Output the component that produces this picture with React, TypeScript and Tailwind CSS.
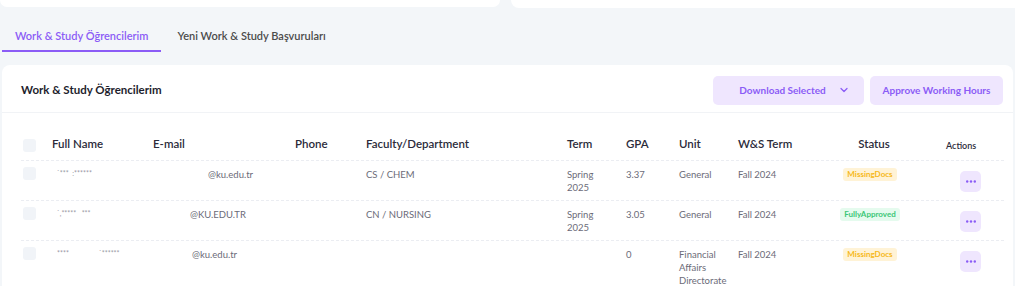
import { ChevronDown } from 'lucide-react';

const cols = 'grid grid-cols-[31px_101px_142px_71px_201px_59px_53px_59px_82px_108px_1fr]';

type Row = {
  name: React.ReactNode;
  email: string;
  emailPad: string;
  faculty: string;
  term: string[];
  gpa: string;
  unit: string[];
  wsTerm: string;
  status: 'MissingDocs' | 'FullyApproved';
};

const rows: Row[] = [
  {
    name: <span>`***&nbsp;&nbsp;:******</span>,
    email: '@ku.edu.tr',
    emailPad: 'pl-[55px]',
    faculty: 'CS / CHEM',
    term: ['Spring', '2025'],
    gpa: '3.37',
    unit: ['General'],
    wsTerm: 'Fall 2024',
    status: 'MissingDocs',
  },
  {
    name: <span>`,*****&nbsp;&nbsp;&nbsp;***</span>,
    email: '@KU.EDU.TR',
    emailPad: 'pl-[37px]',
    faculty: 'CN / NURSING',
    term: ['Spring', '2025'],
    gpa: '3.05',
    unit: ['General'],
    wsTerm: 'Fall 2024',
    status: 'FullyApproved',
  },
  {
    name: (
      <span>
        ****<span className="pl-[30px]">`******</span>
      </span>
    ),
    email: '@ku.edu.tr',
    emailPad: 'pl-[39px]',
    faculty: '',
    term: [],
    gpa: '0',
    unit: ['Financial', 'Affairs', 'Directorate'],
    wsTerm: 'Fall 2024',
    status: 'MissingDocs',
  },
];

function Dots() {
  return (
    <svg width="10" height="3" viewBox="0 0 10 3" className="fill-[#8b5cf6]">
      <circle cx="1.2" cy="1.5" r="1.2" />
      <circle cx="5" cy="1.5" r="1.2" />
      <circle cx="8.8" cy="1.5" r="1.2" />
    </svg>
  );
}

function StatusBadge({ status }: { status: Row['status'] }) {
  if (status === 'FullyApproved') {
    return (
      <span className="rounded-[3px] bg-[#e5fbee] px-[4px] text-[8px] font-bold leading-[13px] text-[#3cc777]">
        FullyApproved
      </span>
    );
  }
  return (
    <span className="rounded-[3px] bg-[#fff3d6] px-[4px] text-[8px] font-bold leading-[13px] text-[#f6b91a]">
      MissingDocs
    </span>
  );
}

export default function App() {
  return (
    <div className="h-[286px] overflow-hidden bg-white font-['Lato',sans-serif]">
      <div className="mr-px h-full bg-[#f3f6f9]">
        {/* top cards */}
        <div className="flex gap-[11px]">
          <div className="h-[7px] w-[500px] rounded-b-lg bg-white" />
          <div className="h-[8px] flex-1 rounded-bl-lg bg-white" />
        </div>

        {/* tabs */}
        <div className="ml-[2px] flex gap-[3px] pt-[20px]">
          <button className="border-b-2 border-[#8b5cf6] px-[13px] pb-[6px] text-[11px] font-semibold leading-[16px] text-[#8b5cf6]">
            Work &amp; Study Öğrencilerim
          </button>
          <button className="border-b-2 border-transparent px-[13px] pb-[6px] text-[11px] font-semibold leading-[16px] text-[#4b4b4b]">
            Yeni Work &amp; Study Başvuruları
          </button>
        </div>

        {/* main card */}
        <div className="mx-[2px] mt-[13px] rounded-t-lg bg-white">
          <div className="flex h-[48px] items-center border-b border-[#f1f3f6] pt-[3px] pl-[19px] pr-[10px]">
            <h2 className="flex-1 text-[11.5px] font-bold text-[#1e1e2d]">Work &amp; Study Öğrencilerim</h2>
            <button className="flex h-[29px] w-[151px] items-center justify-center gap-[12px] rounded-[5px] bg-[#efe6fe] pl-[12px] text-[10px] font-bold text-[#8b5cf6]">
              Download Selected
              <ChevronDown size={12} strokeWidth={2.5} />
            </button>
            <button className="ml-[6px] h-[29px] w-[133px] rounded-[5px] bg-[#efe6fe] text-[10px] font-bold text-[#8b5cf6]">
              Approve Working Hours
            </button>
          </div>

          <div className="pl-[19px] pr-[9px]">
            {/* header */}
            <div
              className={`${cols} items-center border-b border-dashed border-[#ebedf2] pt-[23px] pb-[9px] text-[11.5px] font-semibold leading-[15px] text-[#2b2b3a]`}
            >
              <div className="h-[15px]">
                <div className="mt-[3px] ml-[2px] h-[13px] w-[13px] rounded-[3px] bg-[#f1f4f8]" />
              </div>
              <div>Full Name</div>
              <div>E-mail</div>
              <div>Phone</div>
              <div>Faculty/Department</div>
              <div>Term</div>
              <div>GPA</div>
              <div>Unit</div>
              <div>W&amp;S Term</div>
              <div className="text-center">Status</div>
              <div className="mt-[4px] pl-[18px] text-[9px] leading-[11px]">Actions</div>
            </div>

            {rows.map((r, i) => (
              <div
                key={i}
                className={`${cols} items-start border-b border-dashed border-[#ebedf2] pb-[6px] text-[9.5px] leading-[13px] text-[#6b6b78]`}
              >
                <div>
                  <div className="mt-[6px] ml-[2px] h-[13px] w-[13px] rounded-[3px] bg-[#f1f4f8]" />
                </div>
                <div className="pt-[6px] pl-[5px] text-[7px] text-[#9a9aa5]">{r.name}</div>
                <div className={`pt-[7px] ${r.emailPad}`}>{r.email}</div>
                <div />
                <div className="pt-[7px]">{r.faculty}</div>
                <div className="pt-[7px]">
                  {r.term.map((t) => (
                    <div key={t}>{t}</div>
                  ))}
                </div>
                <div className="pt-[7px]">{r.gpa}</div>
                <div className="pt-[7px]">
                  {r.unit.map((u) => (
                    <div key={u}>{u}</div>
                  ))}
                </div>
                <div className="pt-[7px]">{r.wsTerm}</div>
                <div className="flex justify-center pt-[7px] pr-[8px]">
                  <StatusBadge status={r.status} />
                </div>
                <div className="pt-[10px] pl-[32px]">
                  <button className="flex h-[21px] w-[21px] items-center justify-center rounded-[5px] bg-[#efe6fe]">
                    <Dots />
                  </button>
                </div>
              </div>
            ))}
          </div>
        </div>
      </div>
    </div>
  );
}
